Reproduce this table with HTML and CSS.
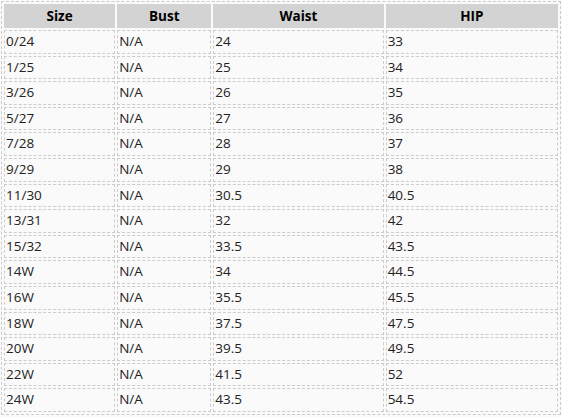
FILE: index.html
```html
<!DOCTYPE html>
<html>
<head>
<meta charset="utf-8">
<link rel="stylesheet" href="styles.css">
</head>
<body>
<table class="size-table">
  <colgroup>
    <col class="c-size"><col class="c-bust"><col class="c-waist"><col class="c-hip">
  </colgroup>
  <thead>
    <tr><th>Size</th><th>Bust</th><th>Waist</th><th>HIP</th></tr>
  </thead>
  <tbody>
    <tr><td>0/24</td><td>N/A</td><td>24</td><td>33</td></tr>
    <tr><td>1/25</td><td>N/A</td><td>25</td><td>34</td></tr>
    <tr><td>3/26</td><td>N/A</td><td>26</td><td>35</td></tr>
    <tr><td>5/27</td><td>N/A</td><td>27</td><td>36</td></tr>
    <tr><td>7/28</td><td>N/A</td><td>28</td><td>37</td></tr>
    <tr><td>9/29</td><td>N/A</td><td>29</td><td>38</td></tr>
    <tr><td>11/30</td><td>N/A</td><td>30.5</td><td>40.5</td></tr>
    <tr><td>13/31</td><td>N/A</td><td>32</td><td>42</td></tr>
    <tr><td>15/32</td><td>N/A</td><td>33.5</td><td>43.5</td></tr>
    <tr><td>14W</td><td>N/A</td><td>34</td><td>44.5</td></tr>
    <tr><td>16W</td><td>N/A</td><td>35.5</td><td>45.5</td></tr>
    <tr><td>18W</td><td>N/A</td><td>37.5</td><td>47.5</td></tr>
    <tr><td>20W</td><td>N/A</td><td>39.5</td><td>49.5</td></tr>
    <tr><td>22W</td><td>N/A</td><td>41.5</td><td>52</td></tr>
    <tr><td>24W</td><td>N/A</td><td>43.5</td><td>54.5</td></tr>
  </tbody>
</table>
</body>
</html>
```
FILE: styles.css
```css
html, body {
  margin: 0;
  padding: 0;
  background: #fafafa;
}
body {
  padding: 1px;
  font-family: "Open Sans", "Noto Sans", sans-serif;
  font-size: 13.5px;
  color: #222;
}
.size-table {
  width: 560px;
  table-layout: fixed;
  border-collapse: separate;
  border-spacing: 2px;
  border: 1px dashed #ccc;
}
.c-size { width: 111px; }
.c-bust { width: 94px; }
.c-waist { width: 170px; }
.c-hip { width: 172px; }
.size-table th {
  background: #d3d3d3;
  border: 1px solid #d3d3d3;
  color: #000;
  font-weight: 700;
  text-align: center;
  padding: 2px 1px;
  line-height: 18px;
}
.size-table td {
  border: 1px dashed #ccc;
  padding: 2px 1px;
  line-height: 17.6px;
  text-align: left;
}
```
